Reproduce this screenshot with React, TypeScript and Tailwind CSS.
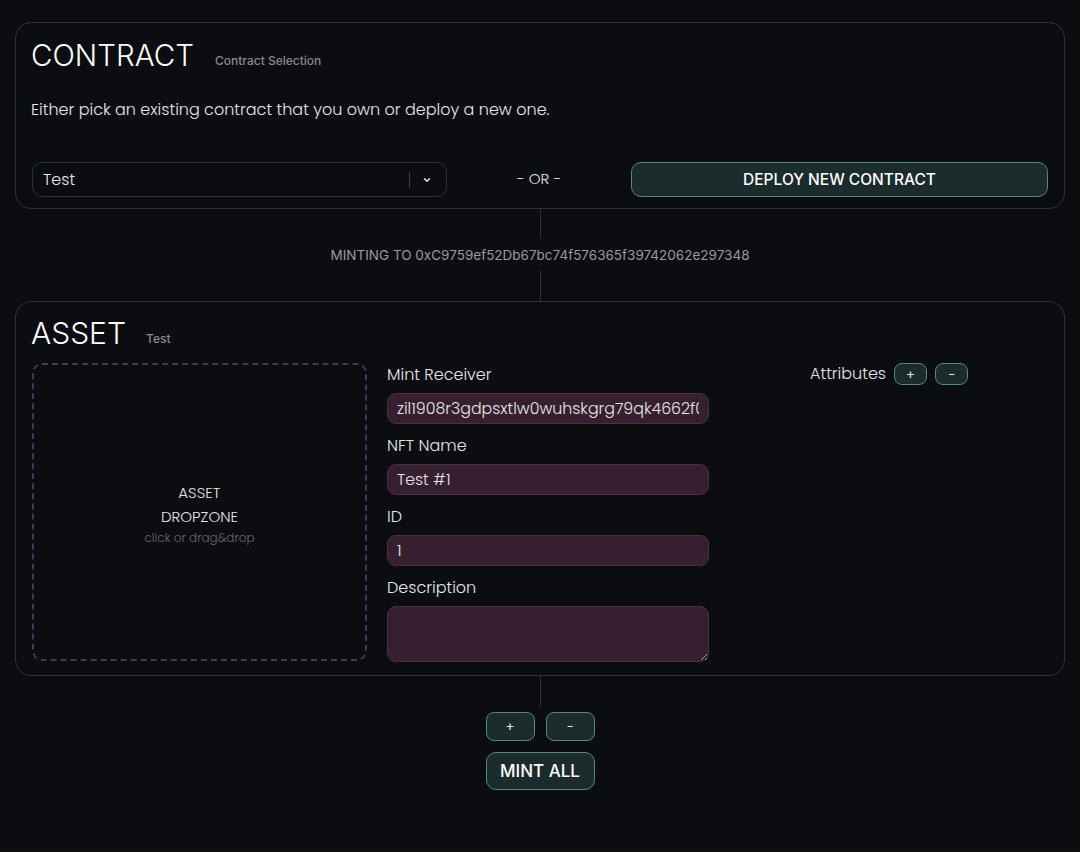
import React from "react"

const font = { fontFamily: '"Poppins", "Open Sans", "Noto Sans", sans-serif' }

function Connector({ h }: { h: string }) {
  return <div className={`w-px ${h} bg-[#2c2f45]`} />
}

function Field({ label, value, area }: { label: string; value?: string; area?: boolean }) {
  return (
    <div className="flex flex-col">
      <label className="mb-[6px] text-[16px] font-light leading-[24px] text-[#e6e6e6]">{label}</label>
      {area ? (
        <textarea
          className="h-[56px] w-full resize-y rounded-[9px] border border-[#4a2f47] bg-[#36202f] px-[10px] py-[4px] text-[15.8px] font-light text-[#e6e6e6] outline-none"
          defaultValue=""
        />
      ) : (
        <input
          className="h-[31px] w-full rounded-[9px] border border-[#4a2f47] bg-[#36202f] px-[9px] text-[15.8px] font-light text-[#e6e6e6] outline-none"
          defaultValue={value}
        />
      )}
    </div>
  )
}

export default function App() {
  return (
    <div className="min-h-[852px] w-full bg-[#0b0d10] text-white" style={font}>
      <div className="flex flex-col items-center px-[15px] pt-[22px]">
        {/* Contract */}
        <div className="w-full rounded-[16px] border border-[#2c2f45] px-[15px] pt-[14px] pb-[11px]">
          <div className="flex items-end gap-[21px]">
            <h1 className="font-['Inter',sans-serif] text-[29.5px] font-light leading-[36px]">CONTRACT</h1>
            <span className="mb-[3px] font-['Inter',sans-serif] text-[12px] font-medium text-[#8a8a8a]">Contract Selection</span>
          </div>
          <p className="mt-[25px] text-[16px] font-light text-[#e6e6e6]">
            Either pick an existing contract that you own or deploy a new one.
          </p>
          <div className="mt-[40px] flex items-center">
            <div className="ml-px flex h-[35px] w-[415px] items-center rounded-[10px] border border-[#2c2f45] pl-[10px] pr-[10px]">
              <span className="flex-1 text-[16px] font-light text-[#e6e6e6]">Test</span>
              <div className="h-[16px] w-px bg-[#3a3d52]" />
              <svg className="ml-[12px] mr-[4px]" width="10" height="10" viewBox="0 0 10 10">
                <path d="M2.5 3.8 L5 6.3 L7.5 3.8" stroke="#e6e6e6" strokeWidth="1.5" fill="none" strokeLinecap="round" strokeLinejoin="round" />
              </svg>
            </div>
            <div className="flex-1 text-center text-[15px] font-light text-[#e6e6e6]">- OR -</div>
            <button className="mr-px h-[35px] w-[417px] rounded-[10px] border border-[#4e8b7d] bg-[#1c2b2b] font-['Inter',sans-serif] text-[15.5px] font-medium text-white">
              DEPLOY NEW CONTRACT
            </button>
          </div>
        </div>

        <Connector h="h-[30px]" />
        <div className="py-[6px] font-['Inter',sans-serif] text-[13.5px] font-normal text-[#9a9a9a]">
          MINTING TO 0xC9759ef52Db67bc74f576365f39742062e297348
        </div>
        <Connector h="h-[30px]" />

        {/* Asset */}
        <div className="w-full rounded-[16px] border border-[#2c2f45] px-[15px] pt-[13px] pb-[13px]">
          <div className="flex items-end gap-[20px]">
            <h1 className="font-['Inter',sans-serif] text-[30px] font-light leading-[36px]">ASSET</h1>
            <span className="mb-[3px] font-['Inter',sans-serif] text-[12px] font-medium text-[#8a8a8a]">Test</span>
          </div>
          <div className="mt-[12px] flex pl-px">
            <div className="flex h-[298px] w-[335px] flex-col items-center justify-center rounded-[10px] border-2 border-dashed border-[#393c5a] pt-[4px]">
              <span className="text-[15px] font-light leading-[24px] text-[#e6e6e6]">ASSET</span>
              <span className="text-[15px] font-light leading-[24px] text-[#e6e6e6]">DROPZONE</span>
              <span className="text-[12px] font-light leading-[18px] text-[#6a6a6a]">click or drag&amp;drop</span>
            </div>
            <div className="ml-[20px] flex w-[322px] flex-col gap-[10px]">
              <Field label="Mint Receiver" value="zil1908r3gdpsxtlw0wuhskgrg79qk4662f0" />
              <Field label="NFT Name" value="Test #1" />
              <Field label="ID" value="1" />
              <Field label="Description" area />
            </div>
            <div className="ml-[101px] flex h-[22px] items-center gap-[8px]">
              <span className="text-[16px] font-light text-[#e6e6e6]">Attributes</span>
              <button className="h-[22px] w-[33px] rounded-[8px] border border-[#4e8b7d] bg-[#1c2b2b] text-[13px] leading-none text-[#e6e6e6]">+</button>
              <button className="h-[22px] w-[33px] rounded-[8px] border border-[#4e8b7d] bg-[#1c2b2b] text-[13px] leading-none text-[#e6e6e6]">−</button>
            </div>
          </div>
        </div>

        <Connector h="h-[31px]" />
        <div className="mt-[5px] flex gap-[11px]">
          <button className="h-[29px] w-[49px] rounded-[8px] border border-[#4e8b7d] bg-[#1c2b2b] text-[13px] text-[#e6e6e6]">+</button>
          <button className="h-[29px] w-[49px] rounded-[8px] border border-[#4e8b7d] bg-[#1c2b2b] text-[13px] text-[#e6e6e6]">−</button>
        </div>
        <button className="mt-[11px] h-[38px] w-[109px] rounded-[10px] border border-[#4e8b7d] bg-[#1c2b2b] font-['Inter',sans-serif] text-[17px] font-medium text-white">
          MINT ALL
        </button>
      </div>
    </div>
  )
}
